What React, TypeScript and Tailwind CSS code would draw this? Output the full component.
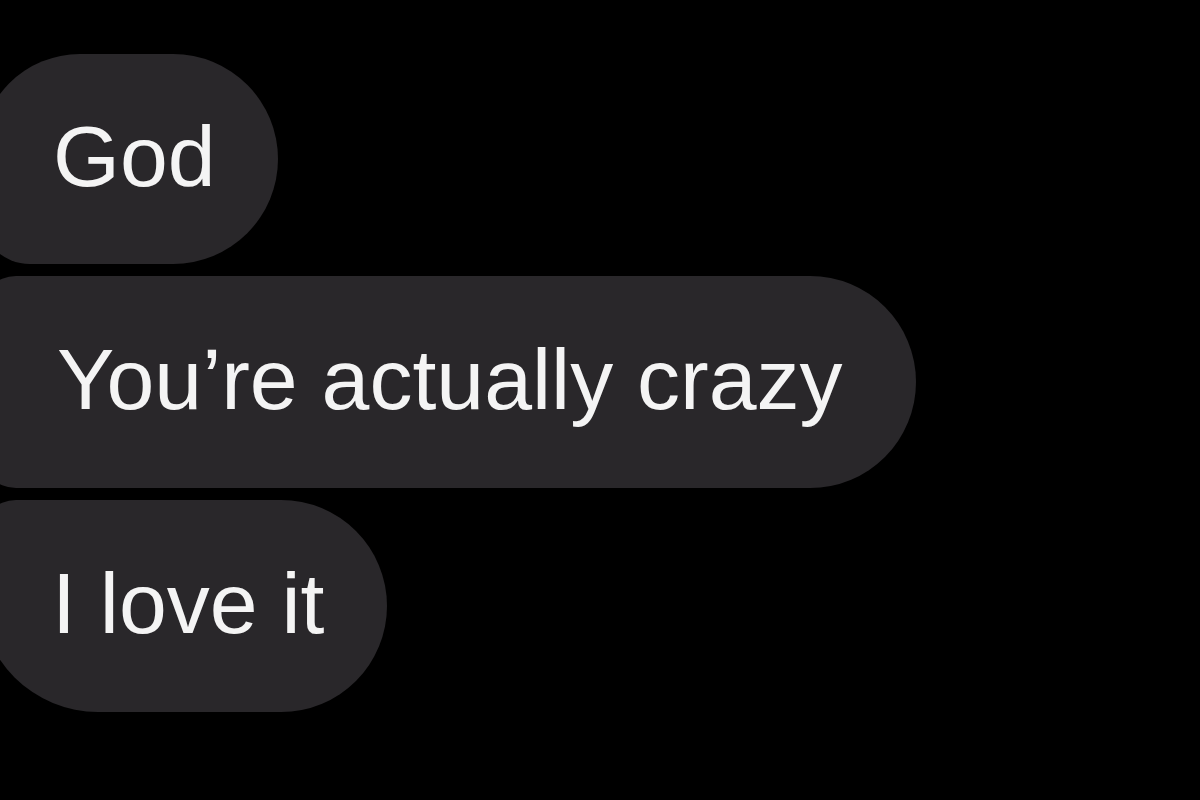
export default function App() {
  return (
    <div
      className="w-[1200px] h-[800px] bg-black overflow-hidden flex flex-col items-start gap-[12px] pt-[54px]"
      style={{ fontFamily: '"Liberation Sans", Arial, sans-serif' }}
    >
      <div className="-ml-[20px] h-[210px] flex items-center pl-[73px] pr-[62px] bg-[#29272a] rounded-tl-[100px] rounded-bl-[50px] rounded-r-[105px]">
        <span className="text-[86px] leading-none text-[#f4f4f4] -mt-[6px]">God</span>
      </div>
      <div className="-ml-[20px] h-[212px] flex items-center pl-[77px] pr-[73px] bg-[#29272a] rounded-l-[36px] rounded-r-[106px]">
        <span className="text-[86px] leading-none text-[#f4f4f4] -mt-[6px]">You’re actually crazy</span>
      </div>
      <div className="-ml-[20px] h-[212px] flex items-center pl-[72px] pr-[63px] bg-[#29272a] rounded-tl-[36px] rounded-bl-[118px] rounded-r-[106px]">
        <span className="text-[86px] leading-none text-[#f4f4f4] -mt-[6px]">I love it</span>
      </div>
    </div>
  );
}
